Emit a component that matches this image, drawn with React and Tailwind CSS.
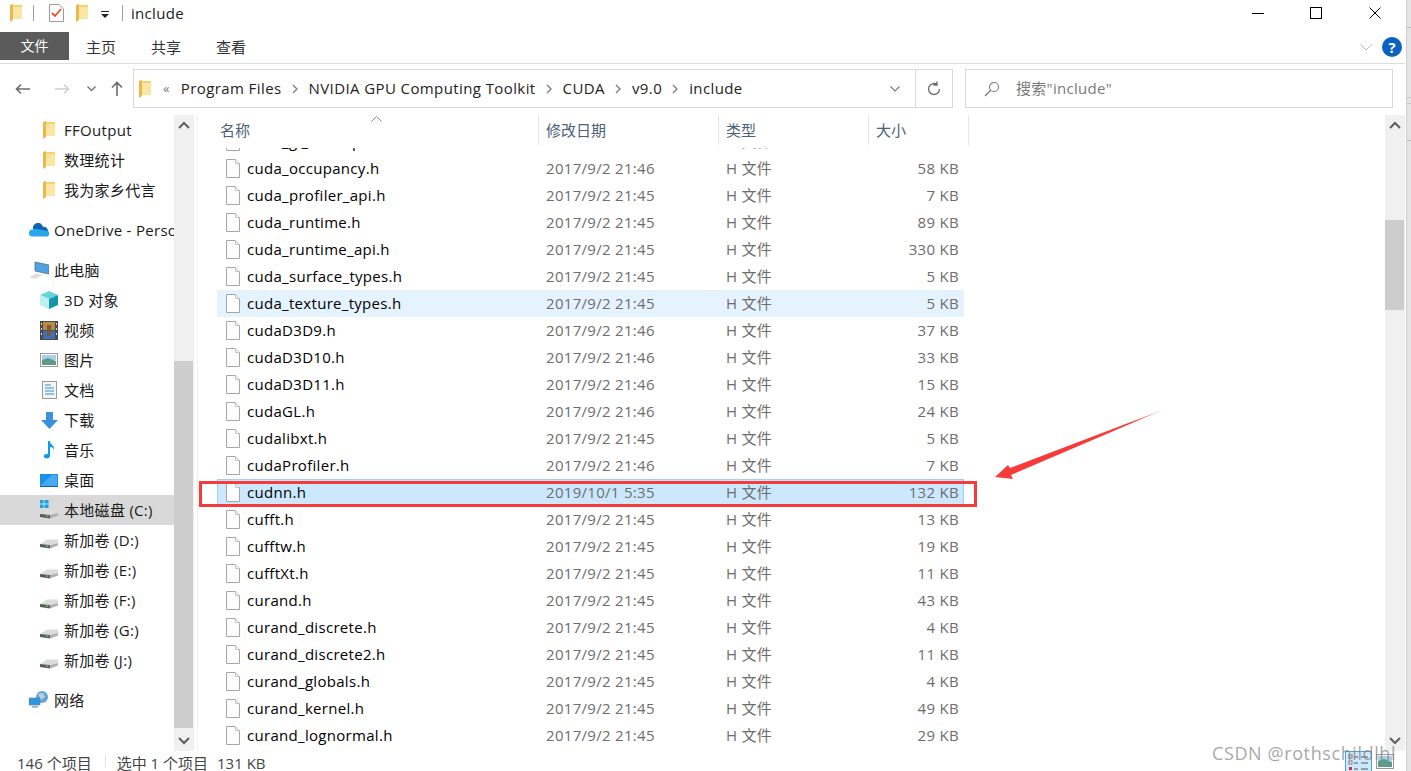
import React from "react";

const FONT = '"Open Sans", "Noto Sans CJK SC", sans-serif';

const files = [
  ["cuda_gl_interop.h", "2017/9/2 21:45", "8 KB"],
  ["cuda_occupancy.h", "2017/9/2 21:46", "58 KB"],
  ["cuda_profiler_api.h", "2017/9/2 21:45", "7 KB"],
  ["cuda_runtime.h", "2017/9/2 21:45", "89 KB"],
  ["cuda_runtime_api.h", "2017/9/2 21:45", "330 KB"],
  ["cuda_surface_types.h", "2017/9/2 21:45", "5 KB"],
  ["cuda_texture_types.h", "2017/9/2 21:45", "5 KB", "hover"],
  ["cudaD3D9.h", "2017/9/2 21:46", "37 KB"],
  ["cudaD3D10.h", "2017/9/2 21:46", "33 KB"],
  ["cudaD3D11.h", "2017/9/2 21:46", "15 KB"],
  ["cudaGL.h", "2017/9/2 21:46", "24 KB"],
  ["cudalibxt.h", "2017/9/2 21:45", "5 KB"],
  ["cudaProfiler.h", "2017/9/2 21:46", "7 KB"],
  ["cudnn.h", "2019/10/1 5:35", "132 KB", "selected"],
  ["cufft.h", "2017/9/2 21:45", "13 KB"],
  ["cufftw.h", "2017/9/2 21:45", "19 KB"],
  ["cufftXt.h", "2017/9/2 21:45", "11 KB"],
  ["curand.h", "2017/9/2 21:45", "43 KB"],
  ["curand_discrete.h", "2017/9/2 21:45", "4 KB"],
  ["curand_discrete2.h", "2017/9/2 21:45", "11 KB"],
  ["curand_globals.h", "2017/9/2 21:45", "4 KB"],
  ["curand_kernel.h", "2017/9/2 21:45", "49 KB"],
  ["curand_lognormal.h", "2017/9/2 21:45", "29 KB"],
];

const FolderIcon = ({ className = "" }) => (
  <svg width="13" height="18" viewBox="0 0 13 18" className={className}>
    <path d="M2 1 L12 1 L12 15 L2 15 Z" fill="#f7d26c" />
    <path d="M3 3 L12 3 L12 15 L3 15 Z" fill="#fbe5a2" />
    <path d="M0 1 L3 0 L3 16 L0 18 Z" fill="#e9b949" />
  </svg>
);

const FileIcon = () => (
  <svg width="16" height="19" viewBox="0 0 16 19" className="shrink-0">
    <path d="M1.5 0.5 H10.5 L14.5 4.5 V18.5 H1.5 Z" fill="#fdfdfd" stroke="#a6a6a6" />
    <path d="M10.5 0.5 V4.5 H14.5" fill="#f2f2f2" stroke="#c4c4c4" />
  </svg>
);

const DriveIcon = ({ windows }) => (
  <svg width="20" height="20" viewBox="0 0 20 20">
    {windows && (
      <g fill="#1ba1e2">
        <rect x="1" y="0" width="3.5" height="3.5" />
        <rect x="5.5" y="0" width="4" height="3.5" />
        <rect x="1" y="4.5" width="3.5" height="3.5" />
        <rect x="5.5" y="4.5" width="4" height="3.5" />
      </g>
    )}
    <path d="M1 14 L8 9.5 H19 V13 L11 15 Z" fill="#dcdcdc" />
    <path d="M1 14 L11 15 V18.5 L1 17 Z" fill="#5a5a5a" />
    <path d="M11 15 L19 13 V15.5 L11 18.5 Z" fill="#b0b0b0" />
    <rect x="7" y="15.5" width="2.5" height="1.2" fill="#5fd35f" />
  </svg>
);

const icons = {
  folder: <FolderIcon />,
  onedrive: (
    <svg width="20" height="14" viewBox="0 0 20 14">
      <path d="M4 6 A5 5 0 0 1 14 4 A4 4 0 0 1 19 8 L10 9 Z" fill="#0f64b5" />
      <path d="M3.5 13.5 A3.5 3.5 0 0 1 3.5 6.5 L8 6 L19 8 A3 3 0 0 1 17 13.5 Z" fill="#28a8ea" />
    </svg>
  ),
  pc: (
    <svg width="20" height="18" viewBox="0 0 20 18">
      <path d="M6 1 L20 4 V13 L6 10 Z" fill="#4fa3e3" stroke="#5a6e80" strokeWidth="0.8" />
      <path d="M0 16 L8 12.5 L14 14 L6 18 Z" fill="#dedede" />
    </svg>
  ),
  cube: (
    <svg width="18" height="18" viewBox="0 0 18 18">
      <path d="M9 0 L18 4 L9 8 L0 4 Z" fill="#63d4dc" />
      <path d="M0 4 L9 8 V18 L0 14 Z" fill="#bdeff0" />
      <path d="M18 4 L9 8 V18 L18 14 Z" fill="#1694a8" />
    </svg>
  ),
  film: (
    <svg width="18" height="19" viewBox="0 0 18 19">
      <rect width="18" height="19" fill="#4a4a4a" />
      <rect x="3" y="1" width="12" height="8" fill="#b98a46" />
      <rect x="3" y="10" width="12" height="8" fill="#3f6fb7" />
      <rect x="7" y="4" width="4" height="11" fill="#7a5a3a" />
      <g fill="#ddd">
        <rect x="1" y="2" width="1" height="2" />
        <rect x="1" y="7" width="1" height="2" />
        <rect x="1" y="12" width="1" height="2" />
        <rect x="16" y="2" width="1" height="2" />
        <rect x="16" y="7" width="1" height="2" />
        <rect x="16" y="12" width="1" height="2" />
      </g>
    </svg>
  ),
  picture: (
    <svg width="18" height="14" viewBox="0 0 18 14">
      <rect x="0.5" y="0.5" width="17" height="13" fill="#fff" stroke="#9a9a9a" />
      <rect x="2" y="2" width="14" height="5" fill="#a9cfe8" />
      <path d="M2 7 L8 5 L16 8 V12 H2 Z" fill="#5e9a8a" />
    </svg>
  ),
  doc: (
    <svg width="15" height="18" viewBox="0 0 15 18">
      <rect x="0.5" y="0.5" width="14" height="17" fill="#f4f4f4" stroke="#9a9a9a" />
      <path d="M3 4 H9 M3 7 H12 M3 10 H12 M3 13 H12" stroke="#2f8fd8" strokeWidth="1" />
    </svg>
  ),
  download: (
    <svg width="17" height="17" viewBox="0 0 17 17">
      <path d="M5 0 H12 V8 H17 L8.5 17 L0 8 H5 Z" fill="#3d90de" />
    </svg>
  ),
  music: (
    <svg width="12" height="18" viewBox="0 0 12 18">
      <path d="M5 0 H7 C7 4 12 4 11 9 C10 6 8 6 7 6 V15 C7 17 4 18 2 17 C0 16 1 13 3 13 C4 13 5 13 5 13.5 Z" fill="#0e9cf0" />
    </svg>
  ),
  desktop: (
    <svg width="18" height="13" viewBox="0 0 18 13">
      <rect width="18" height="13" fill="#1c8fe8" />
      <path d="M1 11 L12 1 H17 V12 H1 Z" fill="#46aaf2" />
      <rect y="12" width="18" height="1" fill="#0c5ea6" />
    </svg>
  ),
  drive: <DriveIcon />,
  driveC: <DriveIcon windows />,
  network: (
    <svg width="20" height="18" viewBox="0 0 20 18">
      <circle cx="13" cy="6" r="6" fill="#6aa3d0" />
      <path d="M9 3 L14 2 L16 6 L12 9 Z" fill="#b5d3e8" />
      <rect x="0" y="7" width="11" height="7" fill="#2f95dc" stroke="#5f7f99" strokeWidth="0.6" />
      <rect x="3" y="15" width="6" height="1.5" fill="#8aa5b8" />
    </svg>
  ),
};

const sidebarItems = [
  ["folder", "FFOutput", 2],
  ["folder", "数理统计", 2],
  ["folder", "我为家乡代言", 2],
  ["onedrive", "OneDrive - Personal", 1, "mt-[10px]"],
  ["pc", "此电脑", 1, "mt-[10px]"],
  ["cube", "3D 对象", 2],
  ["film", "视频", 2],
  ["picture", "图片", 2],
  ["doc", "文档", 2],
  ["download", "下载", 2],
  ["music", "音乐", 2],
  ["desktop", "桌面", 2],
  ["driveC", "本地磁盘 (C:)", 2, "", true],
  ["drive", "新加卷 (D:)", 2],
  ["drive", "新加卷 (E:)", 2],
  ["drive", "新加卷 (F:)", 2],
  ["drive", "新加卷 (G:)", 2],
  ["drive", "新加卷 (J:)", 2],
  ["network", "网络", 1, "mt-[10px]"],
];

const Chevron = ({ up }) => (
  <svg width="12" height="8" viewBox="0 0 12 8">
    <path d={up ? "M1 7 L6 2 L11 7" : "M1 1 L6 6 L11 1"} fill="none" stroke="#5f5f5f" strokeWidth="2" />
  </svg>
);

const Crumb = () => (
  <svg width="8" height="10" viewBox="0 0 8 10" className="ml-[9px] mr-[10px]">
    <path d="M2 1 L6 5 L2 9" fill="none" stroke="#7f7f7f" strokeWidth="1.4" />
  </svg>
);

const ScrollBar = ({ thumbTop, thumbHeight }) => (
  <div className="w-[20px] h-full bg-[#f0f0f0] flex flex-col shrink-0">
    <div className="h-[20px] flex items-center justify-center"><Chevron up /></div>
    <div className="flex-1">
      <div className="bg-[#cdcdcd] w-[19px]" style={{ marginTop: thumbTop, height: thumbHeight }}></div>
    </div>
    <div className="h-[20px] flex items-center justify-center"><Chevron /></div>
  </div>
);

const App = () => {
  return (
    <div className="relative w-[1411px] h-[771px] overflow-hidden bg-white flex" style={{ fontFamily: FONT }}>
      <div className="w-[1406px] h-full flex flex-col text-[15px] leading-none tracking-[0.3px]">
        {/* title bar */}
        <div className="h-[32px] pb-[6px] flex items-center shrink-0 relative">
          <div className="ml-[10px]"><FolderIcon /></div>
          <div className="ml-[10px] w-px h-[16px] bg-[#a0a0a0]"></div>
          <svg width="15" height="18" viewBox="0 0 15 18" className="ml-[15px]">
            <path d="M0.5 0.5 H10 L14.5 5 V17.5 H0.5 Z" fill="#fff" stroke="#9a9a9a" />
            <path d="M3 9 L6 12 L12 5" fill="none" stroke="#e2541f" strokeWidth="1.8" />
          </svg>
          <div className="ml-[12px]"><FolderIcon /></div>
          <svg width="8" height="8" viewBox="0 0 8 8" className="ml-[12px] mt-[3px]">
            <rect x="0" y="0" width="8" height="1" fill="#222" />
            <path d="M0 3 H8 L4 7 Z" fill="#222" />
          </svg>
          <div className="ml-[13px] w-px h-[16px] bg-[#a0a0a0]"></div>
          <span className="ml-[8px] text-[#222]">include</span>
          <div className="ml-auto flex items-center">
            <div className="w-[12px] h-px bg-black mr-[46px]"></div>
            <div className="w-[12px] h-[12px] border border-black mr-[47px]"></div>
            <svg width="12" height="12" viewBox="0 0 12 12" className="mr-[25px]">
              <path d="M0.5 0.5 L11.5 11.5 M11.5 0.5 L0.5 11.5" stroke="#000" strokeWidth="1" />
            </svg>
          </div>
        </div>

        {/* ribbon tabs */}
        <div className="h-[32px] shrink-0 border-b border-[#dcdcdc] flex items-start text-[#333] tracking-normal mr-px">
          <div className="w-[69px] h-[28px] bg-[#5b5b5b] text-white flex items-center justify-center text-[14px]">文件</div>
          <div className="h-[30px] flex items-center ml-[17px]">主页</div>
          <div className="h-[30px] flex items-center ml-[35px]">共享</div>
          <div className="h-[30px] flex items-center ml-[35px]">查看</div>
          <div className="ml-auto h-[30px] flex items-center">
            <svg width="12" height="7" viewBox="0 0 12 7">
              <path d="M0.5 0.5 L6 6 L11.5 0.5" fill="none" stroke="#b5b5b5" strokeWidth="1" />
            </svg>
            <div className="ml-[10px] mr-[3px] w-[20px] h-[20px] rounded-full bg-[#0a63c0] text-white flex items-center justify-center text-[15px] font-bold">?</div>
          </div>
        </div>

        {/* address row */}
        <div className="h-[51px] shrink-0 pt-[5px] flex items-start">
          <div className="w-[133px] h-[39px] flex items-center shrink-0">
            <svg width="16" height="12" viewBox="0 0 16 12" className="ml-[15px]">
              <path d="M15 6 H1.5 M6 1.5 L1.5 6 L6 10.5" fill="none" stroke="#6b6b6b" strokeWidth="1.6" />
            </svg>
            <svg width="16" height="12" viewBox="0 0 16 12" className="ml-[23px]">
              <path d="M1 6 H14.5 M10 1.5 L14.5 6 L10 10.5" fill="none" stroke="#d0d0d0" strokeWidth="1.6" />
            </svg>
            <svg width="9" height="6" viewBox="0 0 9 6" className="ml-[17px]">
              <path d="M0.5 0.5 L4.5 4.5 L8.5 0.5" fill="none" stroke="#7a7a7a" strokeWidth="1.5" />
            </svg>
            <svg width="12" height="15" viewBox="0 0 12 15" className="ml-[15px]">
              <path d="M6 15 V1.5 M1 6.5 L6 1.5 L11 6.5" fill="none" stroke="#6b6b6b" strokeWidth="1.6" />
            </svg>
          </div>
          <div className="w-[820px] h-[39px] border border-[#d9d9d9] flex items-center shrink-0 text-[#222] tracking-[0.4px]">
            <div className="ml-[5px]"><FolderIcon /></div>
            <span className="ml-[11px] text-[#777] text-[13px]">«</span>
            <span className="ml-[11px]">Program Files</span>
            <Crumb />
            <span>NVIDIA GPU Computing Toolkit</span>
            <Crumb />
            <span>CUDA</span>
            <Crumb />
            <span>v9.0</span>
            <Crumb />
            <span>include</span>
            <svg width="10" height="6" viewBox="0 0 10 6" className="ml-auto mr-[15px]">
              <path d="M0.5 0.5 L5 5 L9.5 0.5" fill="none" stroke="#7a7a7a" strokeWidth="1.2" />
            </svg>
            <div className="w-px h-[37px] bg-[#d9d9d9]"></div>
            <svg width="16" height="16" viewBox="0 0 16 16" className="mx-[10px]">
              <path d="M13.5 8 A5.5 5.5 0 1 1 11 3.4 M11 0.5 V4 H7.5" fill="none" stroke="#6b6b6b" strokeWidth="1.3" />
            </svg>
          </div>
          <div className="ml-[12px] w-[428px] h-[39px] border border-[#d9d9d9] flex items-center text-[#7a7a7a] shrink-0">
            <svg width="16" height="16" viewBox="0 0 16 16" className="ml-[18px]">
              <circle cx="10" cy="6" r="4.5" fill="none" stroke="#7a7a7a" strokeWidth="1.1" />
              <path d="M6.7 9.3 L1 15" stroke="#7a7a7a" strokeWidth="1.3" />
            </svg>
            <span className="ml-[16px]">搜索"include"</span>
          </div>
        </div>

        {/* content */}
        <div className="h-[636px] shrink-0 flex">
          {/* nav pane */}
          <div className="w-[174px] shrink-0 overflow-hidden text-[#1a1a1a]">
            {sidebarItems.map(([icon, label, level, extra, selected]) => (
              <div
                key={label}
                className={`h-[30px] flex items-center whitespace-nowrap ${extra || ""} ${selected ? "bg-[#d9d9d9]" : ""}`}
              >
                <div className={`w-[20px] flex justify-center ${level === 2 ? "ml-[39px]" : "ml-[29px]"}`}>{icons[icon]}</div>
                <span className="ml-[5px]">{label}</span>
              </div>
            ))}
          </div>
          <ScrollBar thumbTop={226} thumbHeight={367} />
          <div className="w-[3px] shrink-0"></div>
          <div className="w-px shrink-0 bg-[#f0f0f0]"></div>

          {/* file list */}
          <div className="w-[1207px] shrink-0 flex flex-col pl-[19px] relative">
            <div className="h-[33px] shrink-0 flex text-[#4c607a] relative tracking-normal">
              <div className="w-[322px] h-[30px] border-r border-[#e5e5e5] pl-[3px] flex items-center">名称</div>
              <div className="w-[180px] h-[30px] border-r border-[#e5e5e5] pl-[7px] flex items-center">修改日期</div>
              <div className="w-[150px] h-[30px] border-r border-[#e5e5e5] pl-[7px] flex items-center">类型</div>
              <div className="w-[100px] h-[30px] border-r border-[#e5e5e5] pl-[7px] flex items-center">大小</div>
              <svg width="11" height="6" viewBox="0 0 11 6" className="absolute left-[154px] top-[1px]">
                <path d="M0.5 5.5 L5.5 0.5 L10.5 5.5" fill="none" stroke="#8a8a8a" strokeWidth="1" />
              </svg>
            </div>
            <div className="flex-1 overflow-hidden">
              <div className="-mt-[20px] w-[747px]">
                {files.map(([name, date, size, state]) => (
                  <div
                    key={name}
                    className={`h-[27px] flex items-center text-[#6d6d6d] whitespace-nowrap ${
                      state === "selected"
                        ? "bg-[#cce8ff] shadow-[inset_0_0_0_1px_#99d1ff]"
                        : state === "hover"
                        ? "bg-[#e5f3ff]"
                        : ""
                    }`}
                  >
                    <div className="w-[321px] pl-[8px] flex items-center text-black">
                      <FileIcon />
                      <span className="ml-[6px]">{name}</span>
                    </div>
                    <div className="w-[180px] pl-[8px]">{date}</div>
                    <div className="w-[150px] pl-[8px]">H 文件</div>
                    <div className="w-[96px] pr-[5px] text-right">{size}</div>
                  </div>
                ))}
              </div>
            </div>
            <div className="absolute right-0 top-0 h-full"><ScrollBar thumbTop={85} thumbHeight={90} /></div>
          </div>
        </div>

        {/* status bar */}
        <div className="h-[20px] shrink-0 flex items-center text-[#444] relative tracking-normal">
          <span className="ml-[17px] mt-[4px]">146 个项目</span>
          <div className="ml-[13px] w-px h-[14px] bg-[#e5e5e5]"></div>
          <span className="ml-[11px] mt-[4px]">选中 1 个项目</span>
          <span className="ml-[9px] mt-[4px]">131 KB</span>
          <div className="ml-auto flex items-center mr-[12px]">
            <svg width="27" height="21" viewBox="0 0 27 21">
              <rect x="0.5" y="0.5" width="26" height="21" fill="#cce8ff" stroke="#4aa3df" />
              <path d="M9 6 H13 M16 6 H23 M9 12 H13 M16 12 H23 M9 18 H13 M16 18 H23" stroke="#555" />
              <rect x="4" y="4" width="3" height="3" fill="#fff" stroke="#777" />
              <rect x="4" y="10" width="3" height="3" fill="#fff" stroke="#777" />
              <rect x="4" y="16" width="3" height="3" fill="#c33" />
            </svg>
            <svg width="18" height="15" viewBox="0 0 18 15" className="ml-[4px]">
              <rect x="0.5" y="0.5" width="17" height="14" fill="#fff" stroke="#9a9a9a" />
              <rect x="2" y="2" width="14" height="5" fill="#a9cfe8" />
              <path d="M2 7 L8 5 L16 8 V13 H2 Z" fill="#5e9a8a" />
            </svg>
          </div>
        </div>
      </div>

      {/* edge of the window behind */}
      <div className="w-[5px] h-full bg-[#e4e4e4] border-l border-[#cfcfcf] flex flex-col">
        <div className="h-px bg-[#bdbdbd] mt-[27px]"></div>
        <div className="h-px bg-[#c8c8c8] mt-[69px]"></div>
        <div className="h-px bg-[#c8c8c8] mt-[5px]"></div>
        <div className="h-px bg-[#bdbdbd] mt-[36px]"></div>
      </div>

      {/* annotations drawn over the screenshot */}
      <div className="absolute left-[199px] top-[481px] w-[778px] h-[26px] border-[3px] border-[#f73b3b]"></div>
      <svg width="180" height="80" viewBox="990 405 180 80" className="absolute left-[990px] top-[405px]">
        <defs>
          <linearGradient id="arrowFade" x1="1" y1="0" x2="0" y2="1">
            <stop offset="0" stopColor="#f73b3b" stopOpacity="0.25" />
            <stop offset="0.2" stopColor="#f73b3b" />
          </linearGradient>
        </defs>
        <path d="M995 477 L1008 465 L1010 468 L1165 409 L1011 475 L1013 479 Z" fill="url(#arrowFade)" />
      </svg>
      <div className="absolute left-[1212px] top-[741px] text-[18px] tracking-[0.6px] leading-[24px] text-[#808080]/70 whitespace-nowrap">CSDN @rothschildlhl</div>
    </div>
  );
};

export default App;
